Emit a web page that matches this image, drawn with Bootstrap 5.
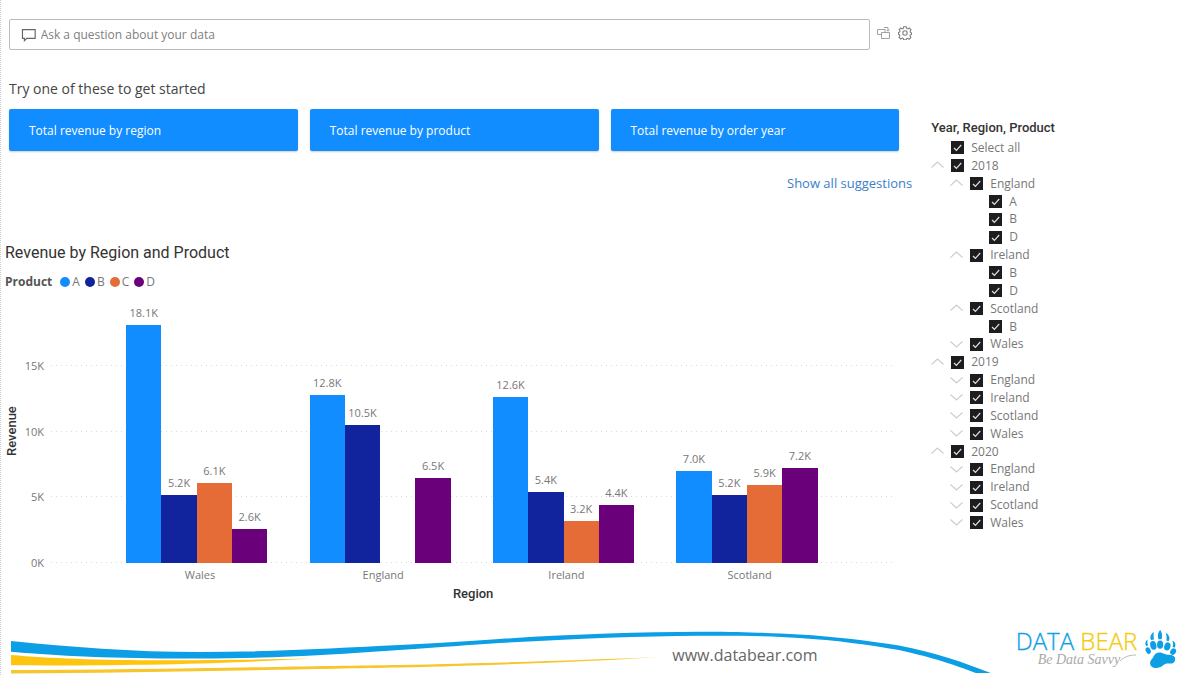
<!DOCTYPE html>
<html lang="en">
<head>
<meta charset="utf-8">
<meta name="viewport" content="width=device-width, initial-scale=1">
<title>Revenue Q&amp;A report</title>
<link href="https://cdn.jsdelivr.net/npm/bootstrap@5.3.0/dist/css/bootstrap.min.css" rel="stylesheet">
<style>
  :root { --c-a:#118dff; --c-b:#12239e; --c-c:#e66c37; --c-d:#6b007b; }
  body { font-family:"Open Sans","Noto Sans",sans-serif; font-size:12px; line-height:20px; color:#777; background:#fff; }
  .report { border-left:1px dotted #ccc; }
  .din { font-family:Roboto,sans-serif; color:#333; }
  .main-pane { width:76%; padding:19px 0 0 8px; }

  .ask { height:31px; border:1px solid #bbb; border-radius:2px; padding:0 11px; gap:4px; margin-right:7px; }
  .ask input { border:0; outline:0; width:100%; padding:0; background:none; color:#777; }
  .ask input::placeholder { color:#808080; opacity:1; }
  .tool { border:0; background:none; padding:0 0 4px; line-height:0; color:#999; }
  .try-title { font-size:14px; line-height:24px; color:#444; margin:27px 0 8px; }
  .tips { gap:12px; padding-right:13px; }
  .tip { height:42px; background:var(--c-a); color:#fff; border:0; border-radius:2px; text-align:left; padding:2px 20px 0; flex:1 1 0; box-shadow:0 1px 2px #0003; }
  .show-all { margin-top:22px; font-size:13px; }
  .show-all a { color:#3a80c8; text-decoration:none; }

  .chart { margin:48px 17px 0 -4px; }
  .chart-title { font-size:16px; line-height:24px; margin:0 0 7px; }
  .legend-title { color:#555; }
  .dot { width:10px; height:10px; border-radius:50%; margin-right:2px; }
  .legend-items { gap:5px; }
  .chart-body { display:grid; grid-template-columns:14px 26px 1fr; column-gap:3px; margin-top:8px; font-size:11px; }
  .axis-name { font-size:13px; font-weight:500; }
  .y-name { writing-mode:vertical-rl; transform:rotate(180deg); text-align:center; line-height:14px; }
  .ticks, .lines, .plot { height:263px; }
  .ticks { display:grid; grid-template-rows:repeat(4,1fr); text-align:right; line-height:20px; padding-right:4px; }
  .ticks span { align-self:end; margin-bottom:-10px; }
  .stack { display:grid; }
  .stack > * { grid-area:1/1; }
  .lines { display:grid; grid-template-rows:repeat(4,1fr); }
  .lines i { background:repeating-linear-gradient(90deg,#d9d9d9 0 1px,transparent 1px 5px) left bottom/100% 1px no-repeat; }
  .plot { padding:0 6.7% 0 6.4%; }
  .group-cell { width:25%; }
  .bars { width:77%; }
  .bar-slot { width:25%; height:100%; }
  .bar-label { line-height:16px; margin-bottom:4px; }
  .bar-a { background:var(--c-a); } .bar-b { background:var(--c-b); }
  .bar-c { background:var(--c-c); } .bar-d { background:var(--c-d); }
  .cats { margin-top:3px; line-height:18px; padding:0 6.4% 0 6.8%; }

  .slicer { padding:117px 0 0 19px; }
  .slicer h2 { font-size:13px; line-height:22px; margin:0; color:#333; font-weight:500; }
  .tree { height:393px; }
  .tree li { gap:7px; }
  .tree label { line-height:16px; }
  .tree .lv1 { padding-left:19px; }
  .tree .lv2 { padding-left:38px; }
  .twist { width:13px; height:13px; border:0; padding:0; background:none; line-height:0; color:#ccc; }
  .tree .form-check-input { width:13px; height:13px; margin:0; border:0; border-radius:0; background-color:#1d1d1f; flex:none;
    background-image:url("data:image/svg+xml,%3Csvg xmlns='http://www.w3.org/2000/svg' viewBox='0 0 13 13'%3E%3Cpath d='M3 7l2.4 2.3L10.2 4' fill='none' stroke='%23ddd' stroke-width='1.2'/%3E%3C/svg%3E"); background-size:100%; }

  .page-foot { padding-left:10px; height:50px; }
  .swoosh { width:82.4%; }
  .swoosh svg { display:block; width:100%; height:50px; }
  .site { position:absolute; left:67.5%; top:18px; line-height:24px; font-size:16px; color:#666; text-decoration:none; }
  .brand { margin-left:25px; gap:8px; }
  .brand-name { font-family:"Open Sans",sans-serif; font-weight:300; font-size:24px; line-height:24px; color:#0d9fe4; -webkit-text-stroke:.3px currentColor; white-space:nowrap; }
  .brand-name span { color:#f3cb0c; }
  .brand-tag { font-family:"Liberation Serif",serif; font-style:italic; font-size:14px; line-height:14px; color:#aaa; padding-left:22px; }
</style>
</head>
<body>
<svg class="d-none" xmlns="http://www.w3.org/2000/svg">
  <symbol id="up" viewBox="0 0 13 13"><path d="M.5 8.500L6.500 3l6 5.500" fill="none" stroke="currentColor" stroke-width="1.100"/></symbol>
  <symbol id="down" viewBox="0 0 13 13"><path d="M.5 3.500L6.500 9l6-5.500" fill="none" stroke="currentColor" stroke-width="1.100"/></symbol>
</svg>
<div class="report d-flex flex-column min-vh-100">
  <div class="d-flex">
    <main class="main-pane">
      <div class="d-flex align-items-center">
        <div class="ask d-flex align-items-center flex-grow-1">
          <svg width="16" height="14" viewBox="0 0 16 14" aria-hidden="true"><path d="M1.500 1.500h13v9H6l-2.500 2.300v-2.300h-2z" fill="none" stroke="#666" stroke-width="1.200"/></svg>
          <input id="question" type="text" placeholder="Ask a question about your data" aria-label="Ask a question about your data">
        </div>
        <button class="tool me-2" type="button" aria-label="Turn this Q&amp;A result into a visual"><svg width="13" height="14" viewBox="0 0 13 14" fill="none" stroke="currentColor"><path d="M4.500 8.500h-4v-5h7.500v3M4.500 6.500h8v6h-8zM7 1.500h4v3.500M9.500 3.700l1.500 1.500 1.500-1.500" stroke-width=".9"/></svg></button>
        <button class="tool" type="button" aria-label="Settings"><svg width="14" height="14" viewBox="0 0 14 14" fill="none" stroke="#808080" stroke-width="1.100"><path d="M5.700.7h2.600l.4 1.700 1.100.5 1.500-.9 1.700 1.900-.9 1.400.4 1.100 1 .5v1.500l-1.200.5-.3 1.100.9 1.500-1.800 1.700-1.400-.9-1.100.4-.4 1H5.700l-.4-1.200-1.100-.4-1.500.9L1 11.300l.9-1.500-.4-1.100-1-.4V6.600l1.100-.5.4-1.100-.9-1.400L2.800 2l1.500.9 1-.5z"/><circle cx="7" cy="7" r="2.200"/></svg></button>
      </div>
      <h2 class="try-title fw-normal">Try one of these to get started</h2>
      <div class="tips d-flex">
        <button class="tip" type="button">Total revenue by region</button>
        <button class="tip" type="button">Total revenue by product</button>
        <button class="tip" type="button">Total revenue by order year</button>
      </div>
      <div class="show-all text-end"><a href="#suggestions">Show all suggestions</a></div>

      <section class="chart">
        <h2 class="chart-title din fw-normal">Revenue by Region and Product</h2>
        <div class="d-flex align-items-center">
          <strong class="legend-title me-2">Product</strong>
          <div class="legend-items d-flex">
            <span class="d-flex align-items-center"><i class="dot bar-a"></i>A</span>
            <span class="d-flex align-items-center"><i class="dot bar-b"></i>B</span>
            <span class="d-flex align-items-center"><i class="dot bar-c"></i>C</span>
            <span class="d-flex align-items-center"><i class="dot bar-d"></i>D</span>
          </div>
        </div>
        <div class="chart-body">
          <div class="axis-name y-name din">Revenue</div>
          <div class="ticks"><span>15K</span><span>10K</span><span>5K</span><span>0K</span></div>
          <div class="stack">
            <div class="lines"><i></i><i></i><i></i><i></i></div>
            <div class="plot d-flex" id="plot"></div>
          </div>
        </div>
        <div class="chart-body mt-0">
          <span></span><span></span>
          <div>
            <div class="cats d-flex text-center"><span class="group-cell">Wales</span><span class="group-cell">England</span><span class="group-cell">Ireland</span><span class="group-cell">Scotland</span></div>
            <div class="axis-name din text-center">Region</div>
          </div>
        </div>
      </section>
    </main>

    <aside class="slicer flex-grow-1">
      <h2 class="din">Year, Region, Product</h2>
      <ul class="tree list-unstyled d-flex flex-column mb-0" id="tree"></ul>
    </aside>
  </div>

  <footer class="page-foot mt-auto d-flex">
    <div class="swoosh position-relative">
      <svg viewBox="0 0 981 50" preserveAspectRatio="none" aria-hidden="true">
        <path fill="#0c9fe6" d="M0 16C60 22 120 27 189 27S330 23 389 20C430 18 460 16 489 14 560 9 630 7 689 6.700 730 6.500 760 8 789 9.500 825 11.500 860 16 889 20.500 925 27 955 38 981 48H966C945 40 925 33 889 25 860 20 825 15 789 13 760 11 730 10.500 689 10.700 630 11 560 14 489 18 460 20 430 22 389 25 320 30 260 33.500 189 33.500S60 32 0 26.700z"/>
        <path fill="#fdc50f" d="M0 30C60 35 130 37 300 33.500 230 38 130 41 0 40.300z"/>
        <path fill="#f6c62c" d="M0 45C130 45 300 41 389 40 490 38 570 35 650 32 570 37 490 40 389 42.500 300 44 130 48 0 48.500z"/>
      </svg>
      <a class="site" href="#site">www.databear.com</a>
    </div>
    <div class="brand d-flex">
      <div class="pt-1">
        <div class="brand-name">DATA <span>BEAR</span></div>
        <div class="brand-tag d-flex">Be Data Savvy<svg width="16" height="10" viewBox="0 0 16 10" fill="none" stroke="#bbb" aria-hidden="true"><path d="M0 8C4 4 9 2 16 2"/></svg></div>
      </div>
      <svg class="mt-1" width="32" height="40" viewBox="0 0 93 117" fill="#0d9fe4" aria-hidden="true">
        <path d="M15 103c-2-10 5-13 9-21 5-11 14-15 25-12 7 2 10 5 18 5 12 0 22 4 21 14s-9 13-17 12c-9-1-12 0-18 5-8 7-19 10-28 7-6-2-9-5-10-10z"/>
        <ellipse cx="9" cy="63" rx="7" ry="10" transform="rotate(-25 9 63)"/>
        <ellipse cx="24" cy="48" rx="9" ry="13" transform="rotate(-12 24 48)"/>
        <ellipse cx="44" cy="46" rx="9" ry="12"/>
        <ellipse cx="65" cy="51" rx="9" ry="12" transform="rotate(18 65 51)"/>
        <ellipse cx="82" cy="66" rx="8" ry="10" transform="rotate(35 82 66)"/>
        <path d="M3 50c-4-7-3-15 5-19-3 7-1 11 1 17zM17 32c-4-9 0-18 9-23-2 8-1 14 0 22zM39 30c-3-10-2-20 5-27 6 8 7 18 4 27zM62 34c2-8 1-15-2-23 10 5 14 15 9 25zM80 52c3-5 2-11 0-18 9 5 11 13 6 21z"/>
      </svg>
    </div>
  </footer>
</div>
<script src="https://cdn.jsdelivr.net/npm/bootstrap@5.3.0/dist/js/bootstrap.bundle.min.js"></script>
<script>
  // Revenue in thousands per region, in product order A to D; the axis runs to 20K.
  const revenue = [[18.1, 5.2, 6.1, 2.6], [12.8, 10.5, null, 6.5], [12.6, 5.4, 3.2, 4.4], [7.0, 5.2, 5.9, 7.2]];
  document.getElementById('plot').innerHTML = revenue.map(r =>
    '<div class="group-cell d-flex justify-content-center"><div class="bars d-flex">' + r.map((v, i) =>
      '<div class="bar-slot d-flex flex-column justify-content-end align-items-center">' + (v === null ? '' :
        `<span class="bar-label">${v.toFixed(1)}K</span><div class="w-100 flex-shrink-0 bar-${'abcd'[i]}" style="height:${v * 5}%"></div>`) +
      '</div>').join('') + '</div></div>').join('');

  // Slicer rows: level, label, chevron direction.
  const rows = [[0, 'Select all', ''], [0, '2018', 'up'], [1, 'England', 'up'], [2, 'A', ''], [2, 'B', ''], [2, 'D', ''],
    [1, 'Ireland', 'up'], [2, 'B', ''], [2, 'D', ''], [1, 'Scotland', 'up'], [2, 'B', ''], [1, 'Wales', 'down']];
  for (const year of ['2019', '2020']) {
    rows.push([0, year, 'up']);
    for (const region of ['England', 'Ireland', 'Scotland', 'Wales']) rows.push([1, region, 'down']);
  }
  document.getElementById('tree').innerHTML = rows.map(([lv, name, dir], i) =>
    `<li class="lv${lv} d-flex align-items-center flex-fill">` +
    (dir ? `<button class="twist" type="button" aria-label="Toggle ${name}"><svg width="13" height="13"><use href="#${dir}"/></svg></button>` : '<span class="twist"></span>') +
    `<input class="form-check-input" type="checkbox" id="n${i}" checked><label for="n${i}">${name}</label></li>`).join('');
</script>
</body>
</html>
